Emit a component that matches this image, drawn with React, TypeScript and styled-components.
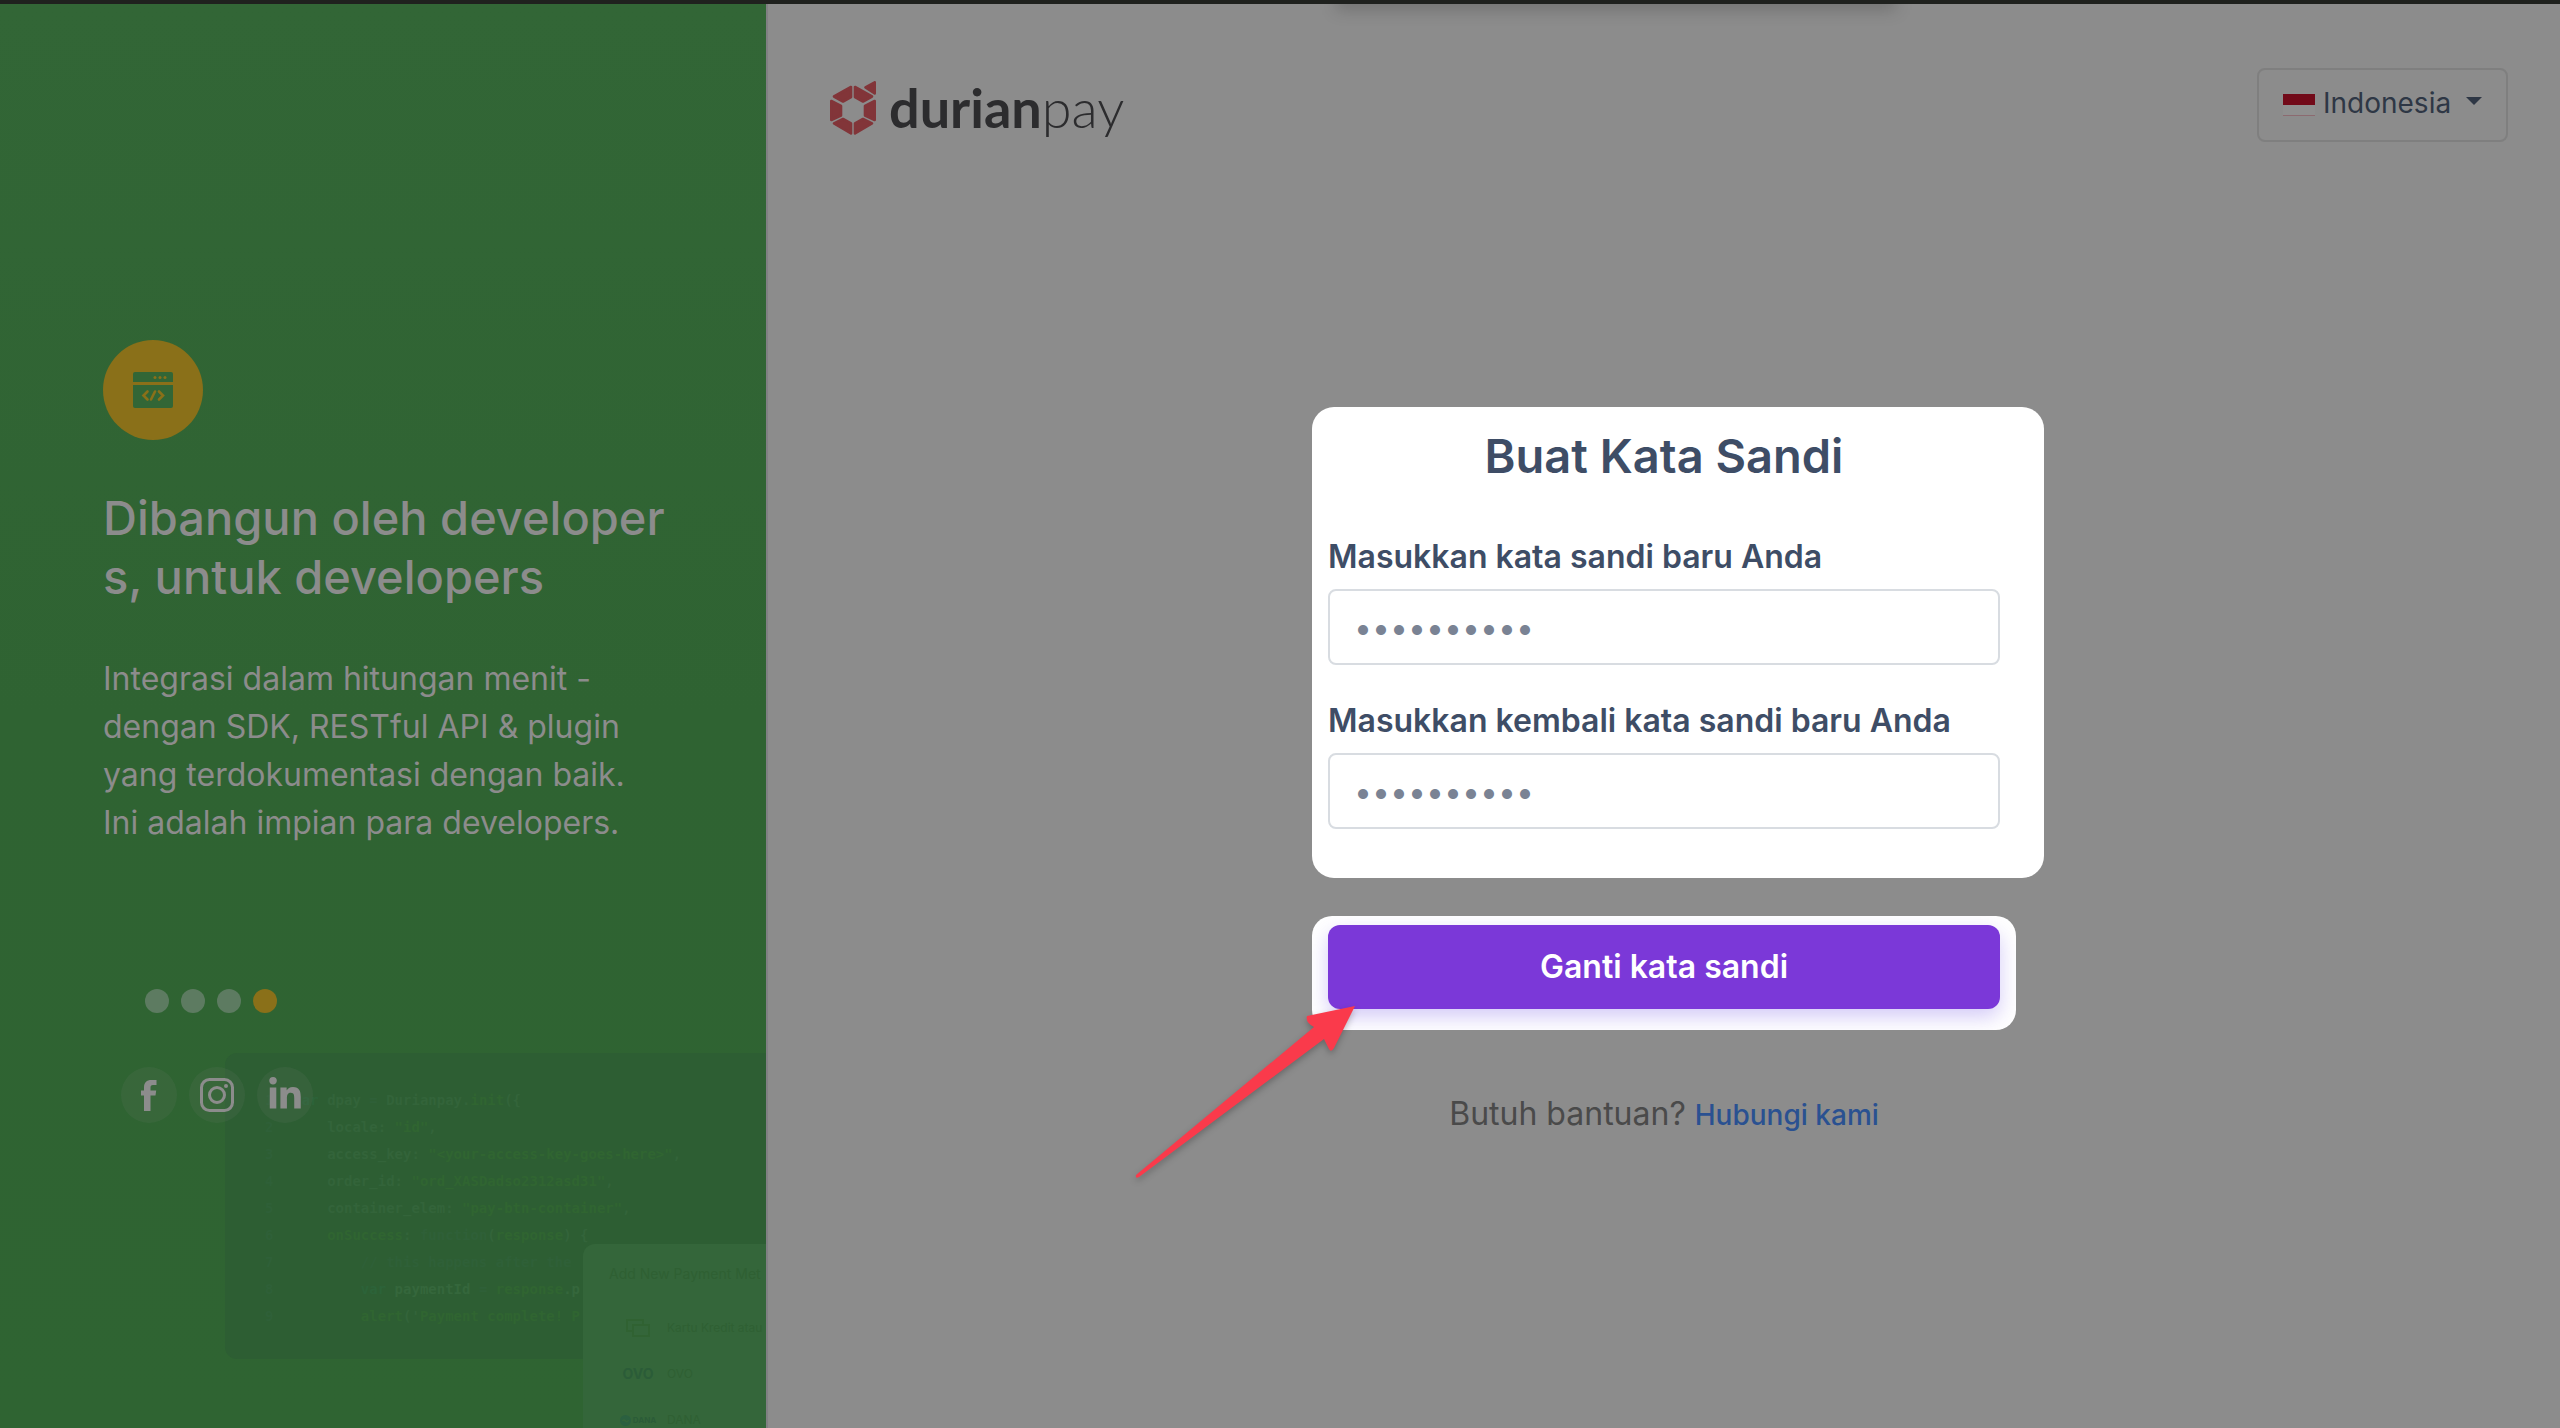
import React from 'react';
import styled, { createGlobalStyle } from 'styled-components';
import { FaLinkedinIn } from 'react-icons/fa';

const GlobalStyle = createGlobalStyle`
  *, *::before, *::after { box-sizing: border-box; }
  body {
    margin: 0;
    background: #8c8c8c;
    font-family: Inter, 'Liberation Sans', sans-serif;
  }
  h1, h2, p, ul { margin: 0; padding: 0; }
`;

const Page = styled.div`
  display: grid;
  grid-template-columns: minmax(0, 3fr) minmax(0, 7fr);
  min-height: 100vh;
  border-top: 4px solid #1f211e;
  background: #8c8c8c;
`;

const Promo = styled.aside`
  position: relative;
  overflow: hidden;
  padding: 336px 98px 0 103px;
  border-right: 2px solid #808083;
  background: linear-gradient(#326636, #2f6332 50%, #2f6432);
  color: #8c8c8c;
`;

const Badge = styled.div`
  display: flex;
  align-items: center;
  justify-content: center;
  width: 100px;
  height: 100px;
  border-radius: 50%;
  background: #8a7019;
`;

const PromoTitle = styled.h2`
  margin-top: 48px;
  font-size: 47px;
  font-weight: 500;
  line-height: 59px;
  word-break: break-all;
`;

const PromoText = styled.p`
  margin-top: 49px;
  font-size: 32px;
  line-height: 48px;
`;

const Pager = styled.div`
  display: flex;
  gap: 12px;
  margin: 142px 0 0 42px;
`;

const PagerDot = styled.button<{ $active?: boolean }>`
  width: 24px;
  height: 24px;
  padding: 0;
  border: 0;
  border-radius: 50%;
  background: ${(p) => (p.$active ? '#8a7019' : '#5d7b61')};
`;

const Socials = styled.nav`
  position: relative;
  z-index: 1;
  display: flex;
  gap: 12px;
  margin: 54px 0 0 18px;
`;

const SocialLink = styled.a`
  display: flex;
  align-items: center;
  justify-content: center;
  width: 56px;
  height: 56px;
  border-radius: 50%;
  background: rgba(140, 140, 140, 0.1);
  color: #8c8c8c;
`;

const CodePreview = styled.div`
  position: absolute;
  top: 1049px;
  left: 225px;
  width: 720px;
  height: 306px;
  padding: 34px 0 0 40px;
  border-radius: 12px;
  background: #2d5e33;
  font: 700 14px/27px 'DejaVu Sans Mono', 'Liberation Mono', monospace;
`;

const CodeLine = styled.div`
  display: flex;
  gap: 20px;
  white-space: pre;
`;

type Kind = 'text' | 'string' | 'keyword' | 'dim' | 'bright';

const tones: Record<Kind, string> = {
  text: '#33643a',
  string: '#306531',
  keyword: '#2c6339',
  dim: '#2f6038',
  bright: '#35673c',
};

const Tone = styled.span<{ $kind: Kind }>`
  color: ${(p) => tones[p.$kind]};
`;

const MethodsPreview = styled.div`
  position: absolute;
  top: 1240px;
  left: 583px;
  width: 400px;
  height: 400px;
  padding: 20px 0 0 26px;
  border-radius: 12px;
  background: #34663a;
  color: #2f6033;
  font-size: 14px;
  line-height: 20px;
  white-space: nowrap;
`;

const MethodList = styled.div`
  margin-top: 21px;
`;

const MethodRow = styled.div`
  display: grid;
  grid-template-columns: 58px 1fr;
  align-items: center;
  height: 46px;
  font-size: 12px;
`;

const MethodLogo = styled.span<{ $size?: number }>`
  display: flex;
  align-items: center;
  justify-content: center;
  gap: 2px;
  color: #2b5c38;
  font-size: ${(p) => p.$size ?? 14}px;
  font-weight: 700;
`;

const Main = styled.main`
  position: relative;
  display: flex;
  flex-direction: column;
  overflow: hidden;

  &::before {
    content: '';
    position: absolute;
    top: -14px;
    left: 568px;
    width: 560px;
    height: 20px;
    background: rgba(0, 0, 0, 0.18);
    filter: blur(8px);
  }
`;

const TopBar = styled.header`
  display: flex;
  justify-content: space-between;
  align-items: flex-start;
  padding: 64px 52px 0 62px;
`;

const Logo = styled.a`
  display: flex;
  align-items: center;
  gap: 12px;
  padding-top: 10px;
  color: #2c2c2e;
  font: 700 54px/60px Lato, 'Open Sans', sans-serif;
  text-decoration: none;
`;

const LogoLight = styled.span`
  font-weight: 300;
`;

const Country = styled.label`
  display: flex;
  align-items: center;
  width: 251px;
  height: 74px;
  padding: 0 24px;
  border: 2px solid #7f7f7f;
  border-radius: 8px;
`;

const CountrySelect = styled.select`
  flex: 1;
  min-width: 0;
  padding: 0 0 4px 8px;
  border: 0;
  appearance: none;
  background: transparent;
  color: #2e3745;
  font: 400 28px/34px Inter, sans-serif;
`;

const Caret = styled.svg`
  width: 16px;
  height: 8px;
  margin-bottom: 8px;
`;

const Form = styled.form`
  display: flex;
  flex-direction: column;
  align-items: flex-start;
  align-self: center;
  width: 704px;
  margin-top: 265px;
`;

const Card = styled.section`
  display: flex;
  flex-direction: column;
  width: 732px;
  padding: 19px 44px 49px 16px;
  border-radius: 22px;
  background: #fff;
`;

const Title = styled.h1`
  margin-bottom: 51px;
  color: #3e4d66;
  font-size: 47px;
  font-weight: 600;
  line-height: 60px;
  text-align: center;
`;

const Field = styled.div`
  display: flex;
  flex-direction: column;
  gap: 12px;

  & + & { margin-top: 36px; }
`;

const FieldLabel = styled.label`
  color: #3e4d66;
  font-size: 32px;
  font-weight: 600;
  line-height: 40px;
`;

const FieldInput = styled.input`
  height: 76px;
  padding: 0 24px;
  border: 2px solid #d8dce1;
  border-radius: 8px;
  outline: 0;
  background: #fff;
  color: #7a8394;
  font: 400 32px/40px Inter, sans-serif;

  &::placeholder { color: #7a8394; opacity: 1; }
`;

const Spotlight = styled.div`
  display: flex;
  width: 704px;
  margin-top: 38px;
  padding: 9px 16px 21px;
  border-radius: 20px;
  overflow: hidden;
  background: #fff;
`;

const Submit = styled.button`
  flex: 1;
  height: 84px;
  border: 0;
  border-radius: 12px;
  background: #7b38d8;
  box-shadow: 0 8px 20px rgba(110, 80, 230, 0.3);
  color: #fff;
  font: 600 32px/40px Inter, sans-serif;
`;

const Help = styled.p`
  align-self: center;
  margin-top: 64px;
  color: #4a4a4a;
  font-size: 32px;
  line-height: 40px;
`;

const HelpLink = styled.a`
  color: #2a5191;
  font-size: 28px;
  font-weight: 500;
  text-decoration: none;
`;

const Arrow = styled.svg`
  position: absolute;
  top: 998px;
  left: 360px;
  width: 232px;
  height: 190px;
  filter: drop-shadow(0 3px 3px rgba(0, 0, 0, 0.25));
  pointer-events: none;
`;

const code: [string, Kind][][] = [
  [['var ', 'keyword'], ['dpay', 'text'], [' = ', 'dim'], ['Durianpay.', 'text'], ['init', 'string'], ['({', 'text']],
  [['    locale: ', 'text'], ['"id"', 'string'], [',', 'text']],
  [['    access_key: ', 'text'], ['"<your-access-key-goes-here>"', 'string'], [',', 'text']],
  [['    order_id: ', 'text'], ['"ord_XASDadso2312asd31"', 'string'], [',', 'text']],
  [['    container_elem: ', 'text'], ['"pay-btn-container"', 'string'], [',', 'text']],
  [['    onSuccess', 'string'], [': ', 'text'], ['function', 'dim'], ['(', 'text'], ['response', 'string'], [') {', 'text']],
  [['        // this happens after the', 'dim']],
  [['        var ', 'keyword'], ['paymentId', 'bright'], [' = ', 'dim'], ['response', 'string'], ['.p', 'bright']],
  [['        alert', 'string'], ["('", 'text'], ['Payment complete! P', 'string']],
];

function BrandMark() {
  return (
    <svg width="47" height="54" viewBox="0 0 47 54" fill="#823539" stroke="#823539" strokeWidth="2.600" strokeLinejoin="round" aria-hidden="true">
      <path d="M21 6v10l-8 4.500-9-5z" />
      <path d="M25 6v10l8 4.500 9-5z" />
      <path d="M1.300 20l9.700 5v9.500l-9.700 4.500z" />
      <path d="M44.700 20l-9.700 5v9.500l9.700 4.500z" />
      <path d="M4 42.500l9-4.500 8 4.500v10z" />
      <path d="M42 42.500l-9-4.500-8 4.500v10z" />
      <path d="M35.500 6.500l9.200-5.200v11.200z" />
    </svg>
  );
}

function CodeWindowIcon() {
  return (
    <svg width="40" height="36" viewBox="0 0 40 36" fill="#326636" aria-hidden="true">
      <path d="M2 0h36a2 2 0 0 1 2 2v8H0V2a2 2 0 0 1 2-2z" />
      <path d="M0 13h40v21a2 2 0 0 1-2 2H2a2 2 0 0 1-2-2z" />
      <g fill="#8a7019">
        <circle cx="22" cy="5.500" r="1.500" />
        <circle cx="27" cy="5.500" r="1.500" />
        <circle cx="32" cy="5.500" r="1.500" />
      </g>
      <path
        d="M14.500 19.500L10.500 23.500l4 4M26 19.500l4 4-4 4M22 19.500l-4 8"
        fill="none"
        stroke="#8a7019"
        strokeWidth="2.600"
        strokeLinecap="round"
      />
    </svg>
  );
}

function FacebookIcon() {
  return (
    <svg width="16" height="31" viewBox="0 0 16 31" fill="#8c8c8c" aria-hidden="true">
      <path d="M3 31V15.500H0V10.500H3V7.500C3 2.500 5.500 0 10.500 0H15.500V5H12C10 5 9.500 6 9.500 7.500V10.500H15.200L14.500 15.500H9.500V31z" />
    </svg>
  );
}

function InstagramIcon() {
  return (
    <svg width="34" height="34" viewBox="0 0 34 34" fill="none" stroke="#8c8c8c" strokeWidth="3" aria-hidden="true">
      <rect x="1.500" y="1.500" width="31" height="31" rx="8" />
      <circle cx="17" cy="17" r="7.500" />
      <circle cx="26" cy="8" r="2" fill="#8c8c8c" stroke="none" />
    </svg>
  );
}

export default function App() {
  return (
    <>
      <GlobalStyle />
      <Page>
        <Promo>
          <CodePreview aria-hidden="true">
            {code.map((line, i) => (
              <CodeLine key={i}>
                <Tone $kind="dim">{i + 1}</Tone>
                <span>
                  {line.map(([text, kind], j) => (
                    <Tone key={j} $kind={kind}>{text}</Tone>
                  ))}
                </span>
              </CodeLine>
            ))}
          </CodePreview>
          <MethodsPreview aria-hidden="true">
            Add New Payment Met
            <MethodList>
              <MethodRow>
                <MethodLogo>
                  <svg width="24" height="18" viewBox="0 0 24 18" fill="none" stroke="#306232" strokeWidth="2">
                    <path d="M6 12H1V1h16v4" />
                    <rect x="7" y="6" width="16" height="11" />
                  </svg>
                </MethodLogo>
                Kartu Kredit atau
              </MethodRow>
              <MethodRow><MethodLogo>OVO</MethodLogo>OVO</MethodRow>
              <MethodRow>
                <MethodLogo $size={8}>
                  <svg width="11" height="11" viewBox="0 0 11 11">
                    <circle cx="5.500" cy="5.500" r="5.500" fill="#2b6040" />
                    <path d="M2.500 6q1.500-2 3 0t3-1" fill="none" stroke="#34663a" strokeWidth="1.500" />
                  </svg>
                  DANA
                </MethodLogo>
                DANA
              </MethodRow>
            </MethodList>
          </MethodsPreview>
          <Badge><CodeWindowIcon /></Badge>
          <PromoTitle>Dibangun oleh developers, untuk developers</PromoTitle>
          <PromoText>
            Integrasi dalam hitungan menit - dengan SDK, RESTful API &amp; plugin yang terdokumentasi
            dengan baik. Ini adalah impian para developers.
          </PromoText>
          <Pager>
            <PagerDot type="button" aria-label="1" />
            <PagerDot type="button" aria-label="2" />
            <PagerDot type="button" aria-label="3" />
            <PagerDot type="button" aria-label="4" $active />
          </Pager>
          <Socials>
            <SocialLink href="#facebook" aria-label="Facebook"><FacebookIcon /></SocialLink>
            <SocialLink href="#instagram" aria-label="Instagram"><InstagramIcon /></SocialLink>
            <SocialLink href="#linkedin" aria-label="LinkedIn"><FaLinkedinIn size={36} /></SocialLink>
          </Socials>
        </Promo>
        <Main>
          <TopBar>
            <Logo href="#home">
              <BrandMark />
              <span>durian<LogoLight>pay</LogoLight></span>
            </Logo>
            <Country>
              <svg width="32" height="22" viewBox="0 0 32 22" aria-hidden="true">
                <path fill="#8f8f8f" d="M0 0h32v22H0z" />
                <path fill="#720a19" d="M0 0h32v11H0z" />
                <path fill="#8c6a70" d="M0 21h32v1H0z" />
              </svg>
              <CountrySelect aria-label="Negara" defaultValue="id">
                <option value="id">Indonesia</option>
              </CountrySelect>
              <Caret viewBox="0 0 16 8" aria-hidden="true">
                <path d="M0 0h16L8 8z" fill="#2e3745" />
              </Caret>
            </Country>
          </TopBar>
          <Form onSubmit={(e) => e.preventDefault()}>
            <Card>
              <Title>Buat Kata Sandi</Title>
              <Field>
                <FieldLabel htmlFor="password">Masukkan kata sandi baru Anda</FieldLabel>
                <FieldInput id="password" type="password" placeholder="••••••••••" />
              </Field>
              <Field>
                <FieldLabel htmlFor="confirm">Masukkan kembali kata sandi baru Anda</FieldLabel>
                <FieldInput id="confirm" type="password" placeholder="••••••••••" />
              </Field>
            </Card>
            <Spotlight><Submit type="submit">Ganti kata sandi</Submit></Spotlight>
            <Help>Butuh bantuan? <HelpLink href="#help">Hubungi kami</HelpLink></Help>
          </Form>
          <Arrow viewBox="0 0 232 190" aria-hidden="true">
            <path
              d="M8 173L186 25Q177 20 179 14L227 4L206 46Q203 51 201 47L196 37L11 175Q7 177 8 173z"
              fill="#fa3a4b"
            />
          </Arrow>
        </Main>
      </Page>
    </>
  );
}
